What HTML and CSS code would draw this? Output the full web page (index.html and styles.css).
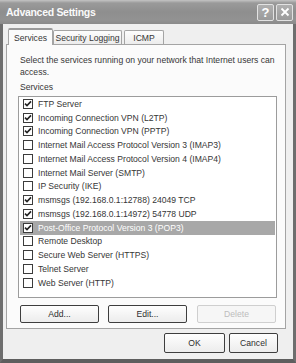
FILE: index.html
```html
<!DOCTYPE html>
<html>
<head>
<meta charset="utf-8">
<link rel="stylesheet" href="styles.css">
</head>
<body>
<div class="window">
  <div class="titlebar">
    <span class="title">Advanced Settings</span>
    <div class="tbtns">
      <span class="tbtn help">?</span>
      <span class="tbtn close"><svg width="10" height="10" viewBox="0 0 10 10"><path d="M1.5 1.5 L8.5 8.5 M8.5 1.5 L1.5 8.5" stroke="#fff" stroke-width="1.8" fill="none"/></svg></span>
    </div>
  </div>
  <div class="body">
    <div class="tabs">
      <div class="tab active t1">Services</div>
      <div class="tab t2">Security Logging</div>
      <div class="tab t3">ICMP</div>
    </div>
    <div class="panel">
      <p class="desc">Select the services running on your network that Internet users can access.</p>
      <div class="label">Services</div>
      <ul class="list">
        <li class="row"><span class="cb"><svg class="chk" width="8" height="8" viewBox="0 0 8 8"><path d="M1 3.6 L3 5.6 L7 1.4"/></svg></span>FTP Server</li>
        <li class="row"><span class="cb"><svg class="chk" width="8" height="8" viewBox="0 0 8 8"><path d="M1 3.6 L3 5.6 L7 1.4"/></svg></span>Incoming Connection VPN (L2TP)</li>
        <li class="row"><span class="cb"><svg class="chk" width="8" height="8" viewBox="0 0 8 8"><path d="M1 3.6 L3 5.6 L7 1.4"/></svg></span>Incoming Connection VPN (PPTP)</li>
        <li class="row"><span class="cb"></span>Internet Mail Access Protocol Version 3 (IMAP3)</li>
        <li class="row"><span class="cb"></span>Internet Mail Access Protocol Version 4 (IMAP4)</li>
        <li class="row"><span class="cb"></span>Internet Mail Server (SMTP)</li>
        <li class="row"><span class="cb"></span>IP Security (IKE)</li>
        <li class="row"><span class="cb"><svg class="chk" width="8" height="8" viewBox="0 0 8 8"><path d="M1 3.6 L3 5.6 L7 1.4"/></svg></span>msmsgs (192.168.0.1:12788) 24049 TCP</li>
        <li class="row"><span class="cb"><svg class="chk" width="8" height="8" viewBox="0 0 8 8"><path d="M1 3.6 L3 5.6 L7 1.4"/></svg></span>msmsgs (192.168.0.1:14972) 54778 UDP</li>
        <li class="row sel"><span class="cb"><svg class="chk" width="8" height="8" viewBox="0 0 8 8"><path d="M1 3.6 L3 5.6 L7 1.4"/></svg></span>Post-Office Protocol Version 3 (POP3)</li>
        <li class="row"><span class="cb"></span>Remote Desktop</li>
        <li class="row"><span class="cb"></span>Secure Web Server (HTTPS)</li>
        <li class="row"><span class="cb"></span>Telnet Server</li>
        <li class="row"><span class="cb"></span>Web Server (HTTP)</li>
      </ul>
      <div class="actions">
        <button class="btn">Add...</button>
        <button class="btn">Edit...</button>
        <button class="btn disabled">Delete</button>
      </div>
    </div>
    <div class="footer">
      <button class="btn ok">OK</button>
      <button class="btn cancel">Cancel</button>
    </div>
  </div>
</div>
</body>
</html>
```
FILE: styles.css
```css
* { box-sizing: border-box; }
html, body { margin: 0; padding: 0; background: #fff; }
body { font-family: "Liberation Sans", Arial, sans-serif; font-size: 8.6px; color: #363636; }

.window {
  width: 296px;
  height: 363px;
  background: #efefef;
  border-left: 3px solid #6e6e6e;
  border-right: 3px solid #6e6e6e;
  border-bottom: 4px solid #5e5e5e;
  display: flex;
  flex-direction: column;
}

.titlebar {
  height: 24px;
  margin: 0 -3px;
  padding: 0 3px 0 6px;
  background: linear-gradient(#c4c4c4 0px, #9a9a9a 3px, #8e8e8e 12px, #929292 20px, #8a8a8a 24px);
  display: flex;
  align-items: center;
  justify-content: space-between;
}
.title {
  color: #fafafa;
  font-weight: bold;
  font-size: 10.5px;
  letter-spacing: -0.3px;
}
.tbtns { display: flex; gap: 2px; }
.tbtn {
  width: 17px;
  height: 17px;
  border: 1px solid #e2e2e2;
  border-radius: 2px;
  background: linear-gradient(#b0b0b0, #9a9a9a);
  color: #fff;
  font-weight: bold;
  font-size: 13px;
  display: flex;
  align-items: center;
  justify-content: center;
  line-height: 1;
}

.body {
  flex: 1;
  padding: 4px 7px 6px 3px;
  display: flex;
  flex-direction: column;
}

.tabs {
  display: flex;
  align-items: flex-end;
  height: 16px;
  padding-left: 2px;
  position: relative;
  z-index: 1;
}
.tab {
  height: 14px;
  border: 1px solid #a4a4a4;
  border-bottom: none;
  border-radius: 2px 2px 0 0;
  background: linear-gradient(#fdfdfd, #ececec);
  display: flex;
  align-items: center;
  justify-content: center;
  white-space: nowrap;
}
.t1 { width: 45px; }
.t2 { width: 69px; }
.t3 { width: 40px; margin-left: 2px; }
.tab.active {
  height: 17px;
  margin-bottom: -1px;
  background: #fbfbfb;
  border-top: 2px solid #9a9a9a;
}

.panel {
  height: 285px;
  background: #fbfbfb;
  border: 1px solid #a4a4a4;
  padding: 9px 8px 0 11px;
  display: flex;
  flex-direction: column;
}
.desc { margin: 0; line-height: 12px; padding-left: 2px; }
.label { margin-top: 3px; line-height: 12px; padding-left: 2px; }
.list {
  list-style: none;
  margin: 3px 0 0 0;
  padding: 0 1px;
  height: 202px;
  border: 1px solid #9c9c9c;
  background: #fff;
}
.row {
  height: 13.75px;
  display: flex;
  align-items: center;
  padding-left: 3px;
  white-space: nowrap;
}
.row.sel { background: #a8a8a8; color: #fff; }
.cb {
  width: 10px;
  height: 10px;
  border: 1px solid #3c3c3c;
  background: #fff;
  margin-right: 5px;
  flex: none;
  display: flex;
}
.chk path { fill: none; stroke: #222; stroke-width: 1.6; }

.actions {
  display: flex;
  gap: 9px;
  margin-top: 7px;
  padding-left: 2px;
}
.btn {
  font-family: inherit;
  font-size: 8.6px;
  color: #2e2e2e;
  background: linear-gradient(#fefefe, #ececec);
  border: 1px solid #3e3e3e;
  border-radius: 2px;
  height: 18px;
  padding: 0;
}
.actions .btn { width: 79px; }
.btn.disabled { border-color: #cfcfcf; color: #bdbdbd; background: #f6f6f6; margin-left: 1px; }

.footer {
  display: flex;
  justify-content: flex-end;
  gap: 4px;
  margin-top: 4px;
  padding-right: 8px;
}
.ok { width: 61px; height: 20px; }
.cancel { width: 49px; height: 20px; }
```
